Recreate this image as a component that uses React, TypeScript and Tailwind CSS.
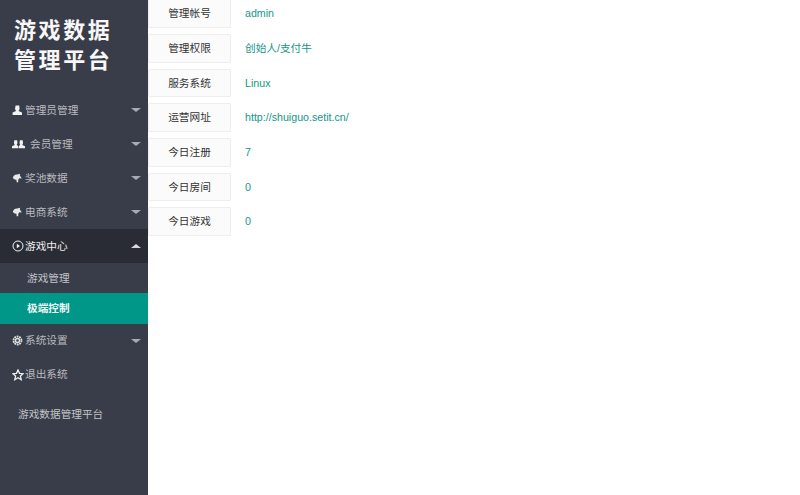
import type { ReactNode } from "react"

const cjk = "font-['Liberation_Sans','Noto_Sans_CJK_SC',sans-serif]"

function UserIcon() {
  return (
    <svg width="11" height="11" viewBox="0 0 11 11" fill="#f2f2f2">
      <path d="M3.6 0.5h3.6l.4 3.4-1 2 3.4 1.600v2.500H.6V7.500L4 5.900l-1-2z" />
    </svg>
  )
}

function GroupIcon() {
  return (
    <svg width="14" height="11" viewBox="0 0 14 11" fill="#f2f2f2">
      <path d="M2.5 1h3l.4 3-.9 2 1.600 1v2.600H0V7.300L2.900 6l-.8-2z" />
      <path d="M8.500 1h3l.4 3-.8 2L14 7.300v2.300H7.200V7l1.600-1-.7-2z" />
    </svg>
  )
}

function LeafIcon() {
  return (
    <svg width="10" height="10" viewBox="0 0 10 10" fill="#e8e8e8">
      <path d="M.8 5C1 3 3 1.200 5.300 1.500L8 .8 7.900 2.600 9.800 5.600 7.300 5.200 6.300 6.800 6.200 9.200H4.700L4.400 6.800 2.700 6.400z" />
    </svg>
  )
}

function PlayIcon() {
  return (
    <svg width="12" height="12" viewBox="0 0 12 12" fill="none" stroke="#f2f2f2">
      <circle cx="6" cy="6" r="5" />
      <path d="M4.800 3.800 8 6 4.800 8.200z" fill="#f2f2f2" stroke="none" />
    </svg>
  )
}

function GearIcon() {
  return (
    <svg width="11" height="11" viewBox="0 0 11 11" fill="none" stroke="#e0e0e0">
      <circle cx="5.500" cy="5.500" r="2" strokeWidth="1.500" />
      <circle cx="5.500" cy="5.500" r="4" strokeWidth="1.800" strokeDasharray="1.800 0.700" />
    </svg>
  )
}

function StarIcon() {
  return (
    <svg width="12" height="12" viewBox="0 0 12 12" fill="none" stroke="#f2f2f2" strokeWidth="1.300">
      <path d="M6 1l1.500 3.300 3.700.4-2.800 2.400.8 3.600L6 8.800l-3.200 1.900.8-3.600L.8 4.700l3.700-.4z" />
    </svg>
  )
}

function Caret({ up }: { up?: boolean }) {
  return (
    <span
      className={
        up
          ? "ml-auto mr-[7px] border-x-[5px] border-b-[4px] border-x-transparent border-b-[#d8d8d8]"
          : "ml-auto mr-[7px] border-x-[5px] border-t-[4px] border-x-transparent border-t-[#a9abb2]"
      }
    />
  )
}

function MenuItem(props: { icon: ReactNode; label: string; gap?: string; active?: boolean; caret?: boolean }) {
  const { icon, label, active, caret = true } = props
  return (
    <div
      className={
        active
          ? "flex h-[34px] items-center pl-3 bg-[#2a2c35] text-[#f0f0f0]"
          : "flex h-[34px] items-center pl-3 text-[#b9bbc0]"
      }
    >
      <span className="flex w-[13px] shrink-0 items-center">{icon}</span>
      <span className={props.gap ?? "ml-0"}>{label}</span>
      {caret && <Caret up={active} />}
    </div>
  )
}

const rows = [
  ["管理帐号", "admin"],
  ["管理权限", "创始人/支付牛"],
  ["服务系统", "Linux"],
  ["运营网址", "http://shuiguo.setit.cn/"],
  ["今日注册", "7"],
  ["今日房间", "0"],
  ["今日游戏", "0"]
]

export default function App() {
  return (
    <div className={`flex h-[495px] w-[800px] overflow-hidden bg-white text-[10.67px] leading-none ${cjk}`}>
      <aside className="h-full w-[148px] shrink-0 bg-[#393d49]">
        <div className="pl-[14px] pt-[16px] pb-[17px] text-[22px] font-bold leading-[30px] tracking-[2.6px] text-[#f7f7f7]">
          <div>游戏数据</div>
          <div>管理平台</div>
        </div>
        <MenuItem icon={<UserIcon />} label="管理员管理" />
        <MenuItem icon={<GroupIcon />} label="会员管理" gap="ml-[5px]" />
        <MenuItem icon={<LeafIcon />} label="奖池数据" />
        <MenuItem icon={<LeafIcon />} label="电商系统" />
        <MenuItem icon={<PlayIcon />} label="游戏中心" active />
        <div className="flex h-[30px] items-center pl-[27px] text-[#c2c3c8]">游戏管理</div>
        <div className="flex h-[30.5px] items-center bg-[#009688] pl-[27px] font-bold text-[#eef6f5]">极端控制</div>
        <MenuItem icon={<GearIcon />} label="系统设置" />
        <MenuItem icon={<StarIcon />} label="退出系统" caret={false} />
        <div className="pl-[18px] pt-[17px] text-[#c2c3c8]">游戏数据管理平台</div>
      </aside>
      <main className="-mt-[0.67px] flex flex-1 flex-col gap-[6px]">
        {rows.map((row) => (
          <div key={row[0]} className="flex h-[28.67px] items-center">
            <div className="flex h-full w-[83px] items-center justify-center rounded-[1px] border border-[#eeeeee] bg-[#fbfbfb] text-[#333333]">
              {row[0]}
            </div>
            <div className="pl-[14px] text-[#16958a]">{row[1]}</div>
          </div>
        ))}
      </main>
    </div>
  )
}
